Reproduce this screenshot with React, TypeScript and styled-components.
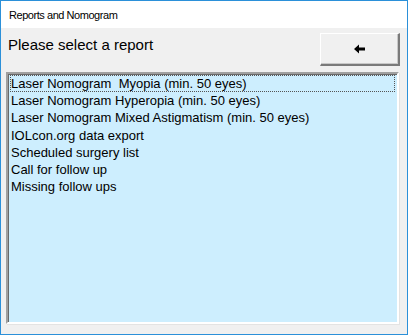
import { createGlobalStyle, styled } from 'styled-components';

const GlobalStyle = createGlobalStyle`
  html, body {
    margin: 0;
    padding: 0;
    background: #ffffff;
  }
`;

const Window = styled.div`
  box-sizing: border-box;
  width: 408px;
  height: 335px;
  border: 1px solid #2b90d9;
  display: flex;
  flex-direction: column;
  background: #f0f0f0;
`;

const TitleBar = styled.div`
  height: 27px;
  background: #ffffff;
  display: flex;
  align-items: center;
  padding-left: 8px;
  font-family: 'Liberation Sans', Arial, sans-serif;
  font-size: 11px;
  letter-spacing: -0.45px;
  color: #000;
`;

const Body = styled.div`
  flex: 1;
  display: flex;
  flex-direction: column;
  padding: 5px 8px 10px 5px;
  gap: 6px;
`;

const Header = styled.div`
  display: flex;
  justify-content: space-between;
  align-items: flex-start;
`;

const Heading = styled.h1`
  margin: 3px 0 0 2px;
  font-family: 'Liberation Sans', Arial, sans-serif;
  font-size: 15px;
  font-weight: normal;
  color: #000;
`;

const BackButton = styled.button`
  box-sizing: border-box;
  width: 80px;
  height: 33px;
  margin-right: -1px;
  background: #f0f0f0;
  border-style: solid;
  border-width: 1px 2px 2px 1px;
  border-color: #ffffff #7a7a7a #7a7a7a #ffffff;
  box-shadow: inset -1px -1px 0 #c8c8c8;
  display: flex;
  align-items: center;
  justify-content: center;
  padding: 0;
  color: #000;
`;

const ListBox = styled.ul`
  flex: 1;
  margin: 0;
  padding: 1px 2px;
  list-style: none;
  background: #cdeefe;
  border-style: solid;
  border-width: 2px;
  border-color: #a0a0a0 #ffffff #ffffff #a0a0a0;
  box-shadow: inset 1px 1px 0 #696969, 1px 1px 0 #e3e3e3;
`;

const Item = styled.li<{ $focused?: boolean }>`
  height: 17.2px;
  line-height: 17px;
  padding-left: 1px;
  font-family: 'Liberation Sans', Arial, sans-serif;
  font-size: 13px;
  color: #000;
  white-space: pre;
  box-sizing: border-box;
  outline: ${(p) => (p.$focused ? '1px dotted #555' : 'none')};
  outline-offset: -1px;
`;

const reports = [
  'Laser Nomogram  Myopia (min. 50 eyes)',
  'Laser Nomogram Hyperopia (min. 50 eyes)',
  'Laser Nomogram Mixed Astigmatism (min. 50 eyes)',
  'IOLcon.org data export',
  'Scheduled surgery list',
  'Call for follow up',
  'Missing follow ups',
];

export default function App() {
  return (
    <>
      <GlobalStyle />
      <Window>
        <TitleBar>Reports and Nomogram</TitleBar>
        <Body>
          <Header>
            <Heading>Please select a report</Heading>
            <BackButton>
              <svg width="12" height="10" viewBox="0 0 12 10">
                <path d="M0 5 L5 0.5 V3.5 H11 V6.5 H5 V9.5 Z" fill="#000" />
              </svg>
            </BackButton>
          </Header>
          <ListBox>
            {reports.map((r, i) => (
              <Item key={r} $focused={i === 0}>
                {r}
              </Item>
            ))}
          </ListBox>
        </Body>
      </Window>
    </>
  );
}
